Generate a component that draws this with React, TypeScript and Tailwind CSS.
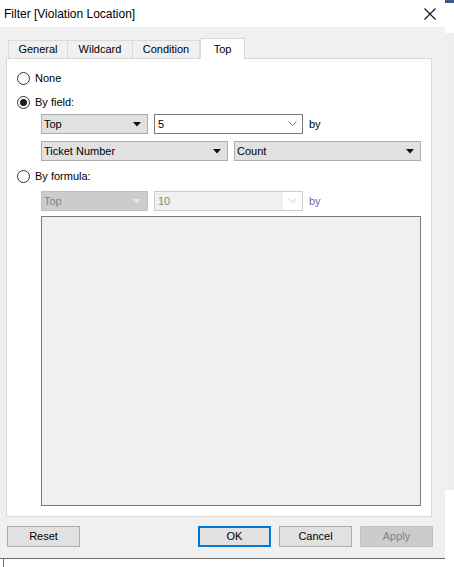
import React from 'react';

const font = { fontFamily: '"Liberation Sans", Arial, sans-serif' };

const Radio = ({ checked, label }: { checked?: boolean; label: string }) => (
  <div className="flex items-center h-[16px] pl-[10px]">
    <span className="w-[13px] h-[13px] rounded-full border border-[#333] bg-white flex items-center justify-center">
      {checked && <span className="w-[7px] h-[7px] rounded-full bg-[#1f1f1f]" />}
    </span>
    <span className="ml-[5px] text-[11px] text-black leading-none">{label}</span>
  </div>
);

const Arrow = ({ disabled }: { disabled?: boolean }) => (
  <svg width="8" height="5" viewBox="0 0 8 5" className="shrink-0">
    <path d="M0 0 H8 L4 4.5 Z" fill={disabled ? '#e8e8e8' : '#111'} />
  </svg>
);

const Chevron = ({ disabled }: { disabled?: boolean }) => (
  <svg width="9" height="6" viewBox="0 0 9 6" className="shrink-0">
    <path d="M0.5 0.5 L4.5 4.5 L8.5 0.5" fill="none" stroke={disabled ? '#c8c8c8' : '#7a7a7a'} strokeWidth="1" />
  </svg>
);

const Select = ({ w, label, disabled }: { w: string; label: string; disabled?: boolean }) => (
  <div
    className={`${w} h-[20px] flex items-center justify-between pl-[2px] pr-[6px] border text-[11px] ${
      disabled ? 'bg-[#cccccc] border-[#bfbfbf] text-[#838383]' : 'bg-[#e1e1e1] border-[#adadad] text-black'
    }`}
  >
    <span>{label}</span>
    <Arrow disabled={disabled} />
  </div>
);

const Combo = ({ value, disabled }: { value: string; disabled?: boolean }) => (
  <div
    className={`w-[149px] h-[20px] flex items-center border bg-white text-[11px] ${
      disabled ? 'border-[#cccccc] text-[#838383]' : 'border-[#7a7a7a] text-black'
    }`}
  >
    <div className={`flex-1 h-full flex items-center pl-[3px] ${disabled ? 'bg-[#f0f0f0] mr-[2px]' : ''}`}>{value}</div>
    <div className="w-[17px] flex justify-center pr-[3px]">
      <Chevron disabled={disabled} />
    </div>
  </div>
);

const Btn = ({ label, primary, disabled, ml }: { label: string; primary?: boolean; disabled?: boolean; ml?: string }) => (
  <div
    className={`${ml ?? ''} w-[73px] h-[21px] flex items-center justify-center text-[11px] ${
      primary
        ? 'border-2 border-[#0078d7] bg-[#e1e1e1] text-black'
        : disabled
        ? 'border border-[#bfbfbf] bg-[#cccccc] text-[#838383]'
        : 'border border-[#adadad] bg-[#e1e1e1] text-black'
    }`}
  >
    {label}
  </div>
);

const Tab = ({ label, w, active }: { label: string; w: string; active?: boolean }) => (
  <div
    className={`${w} flex items-center justify-center text-[11px] text-black border-t border-l border-r ${
      active ? 'h-[21px] bg-white border-[#d9d9d9] -mb-px relative z-10' : 'h-[18px] bg-[#f0f0f0] border-[#d9d9d9] -ml-px first:ml-0'
    }`}
  >
    {label}
  </div>
);

export default function App() {
  return (
    <div className="w-[454px] h-[567px] bg-white flex overflow-hidden" style={font}>
      <div className="w-[445px] flex flex-col">
        <div className="h-[27px] bg-white flex items-center justify-between pl-[4px] pr-[9px]">
          <span className="text-[12px] text-black">Filter [Violation Location]</span>
          <svg width="12" height="12" viewBox="0 0 12 12">
            <path d="M0.5 0.5 L11.5 11.5 M11.5 0.5 L0.5 11.5" stroke="#111" strokeWidth="1.1" />
          </svg>
        </div>
        <div className="h-[532px] bg-[#f0f0f0] border-b border-[#6e6e6e] flex flex-col pt-[11px]">
          <div className="flex items-end pl-[8px] h-[20px]">
            <Tab label="General" w="w-[60px]" />
            <Tab label="Wildcard" w="w-[66px]" />
            <Tab label="Condition" w="w-[68px]" />
            <Tab label="Top" w="w-[45px]" active />
          </div>
          <div className="ml-[6px] w-[426px] h-[459px] bg-white border border-[#d9d9d9] flex flex-col pt-[11px]">
            <Radio label="None" />
            <div className="mt-[8px]">
              <Radio label="By field:" checked />
            </div>
            <div className="mt-[4px] pl-[34px] flex items-center">
              <Select w="w-[107px]" label="Top" />
              <div className="ml-[6px]">
                <Combo value="5" />
              </div>
              <span className="ml-[6px] text-[11px] text-black">by</span>
            </div>
            <div className="mt-[7px] pl-[34px] flex items-center">
              <Select w="w-[187px]" label="Ticket Number" />
              <div className="ml-[6px]">
                <Select w="w-[187px]" label="Count" />
              </div>
            </div>
            <div className="mt-[7px]">
              <Radio label="By formula:" />
            </div>
            <div className="mt-[7px] pl-[34px] flex items-center">
              <Select w="w-[107px]" label="Top" disabled />
              <div className="ml-[6px]">
                <Combo value="10" disabled />
              </div>
              <span className="ml-[6px] text-[11px] text-[#6d6d9a]">by</span>
            </div>
            <div className="mt-[5px] ml-[34px] w-[380px] h-[290px] bg-[#f0f0f0] border border-[#7a7a7a]" />
          </div>
          <div className="mt-[9px] flex items-center pl-[7px]">
            <Btn label="Reset" />
            <Btn label="OK" primary ml="ml-[118px]" />
            <Btn label="Cancel" ml="ml-[8px]" />
            <Btn label="Apply" disabled ml="ml-[8px]" />
          </div>
        </div>
        <div className="flex-1 ml-[3px] border-l border-[#6e6e6e] bg-white" />
      </div>
      <div className="w-[9px] flex flex-col">
        <div className="h-[3px] bg-[#3c5a8c]" />
        <div className="h-[30px] bg-white" />
        <div className="h-[457px] bg-[#efefef]" />
        <div className="flex-1 bg-white" />
      </div>
    </div>
  );
}
